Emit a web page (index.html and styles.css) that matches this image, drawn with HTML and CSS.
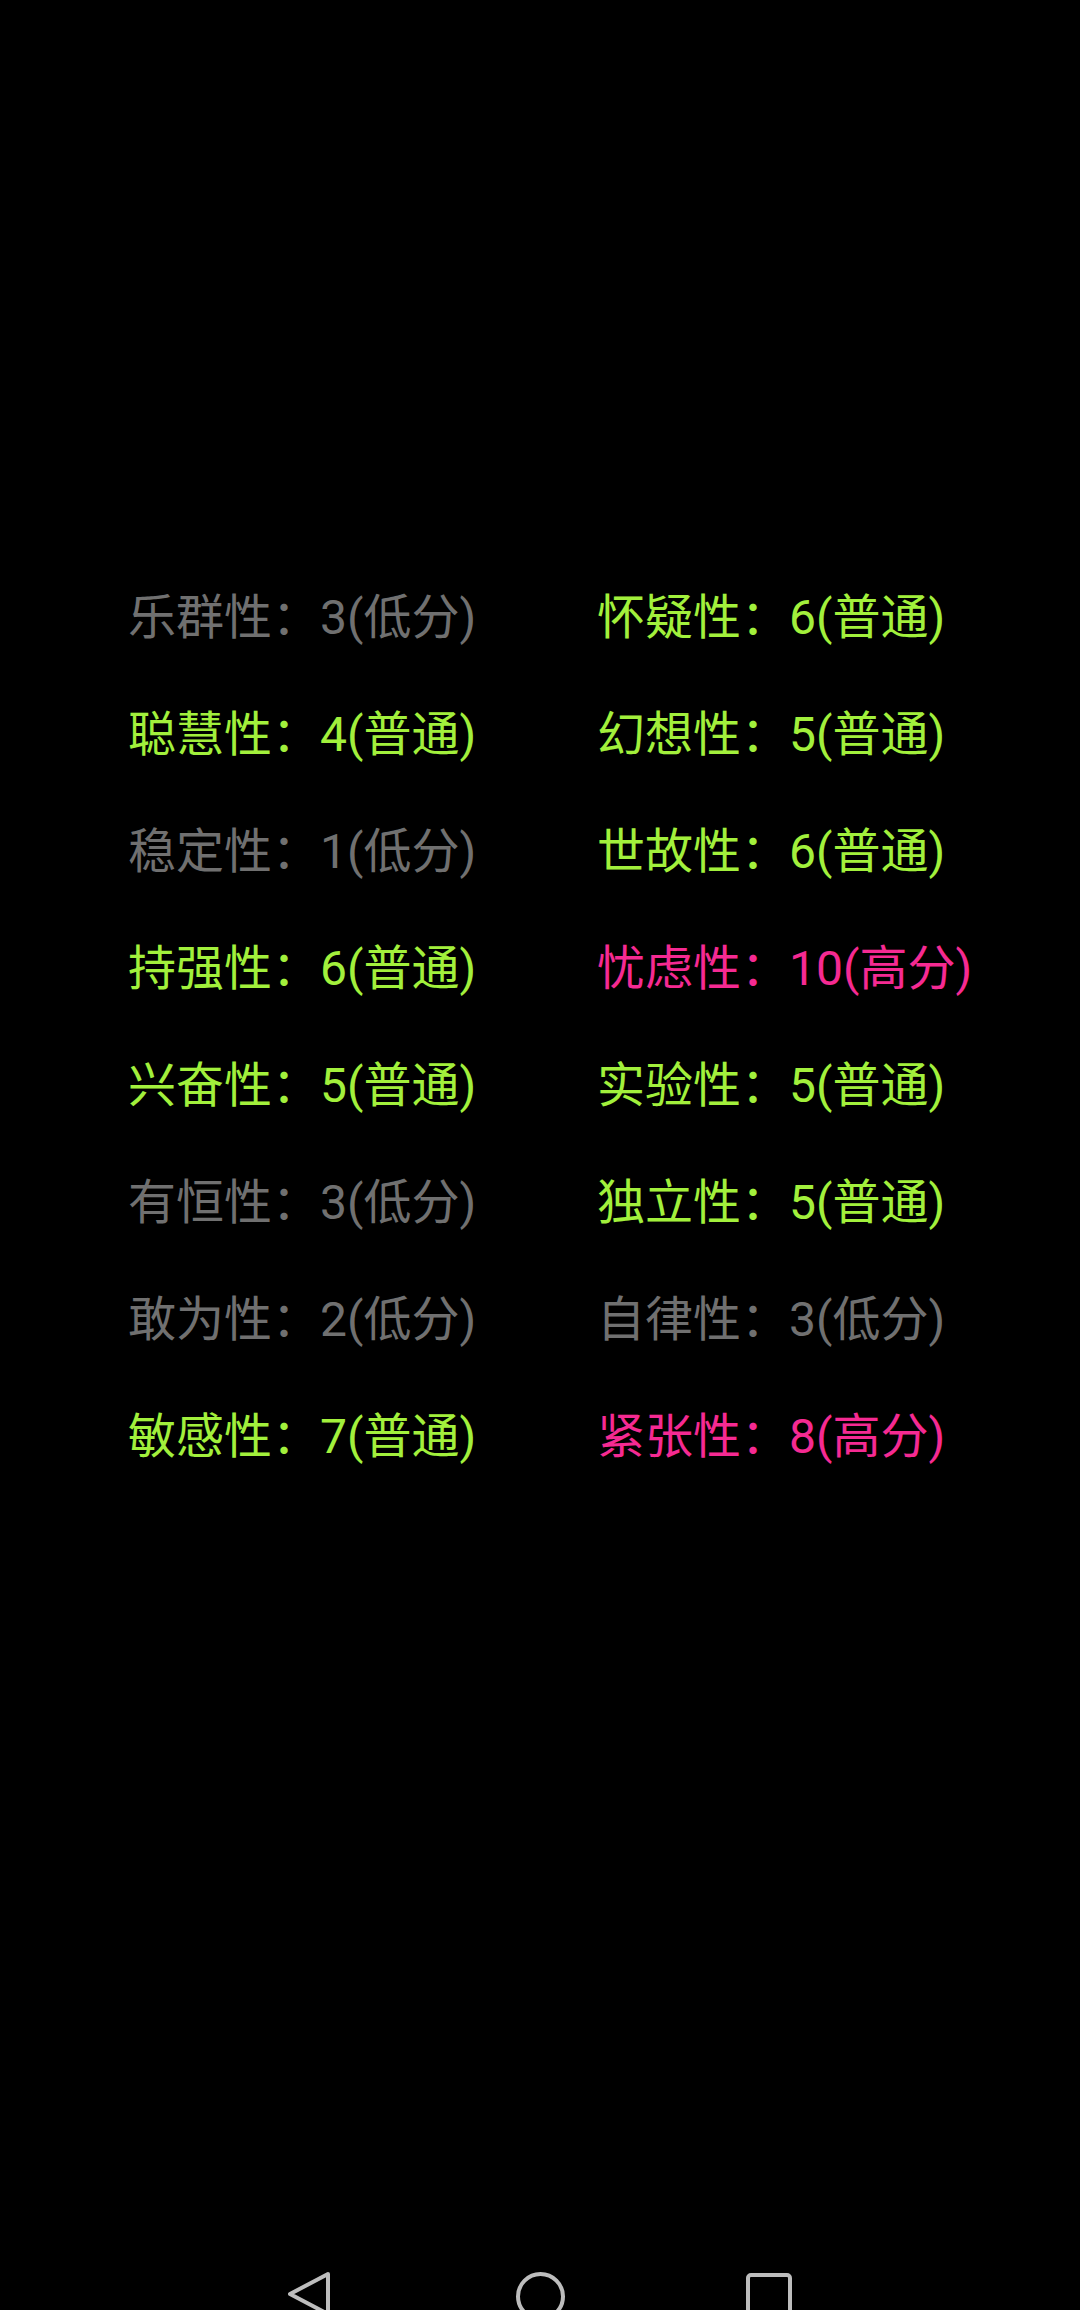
FILE: index.html
```html
<!DOCTYPE html>
<html lang="zh">
<head>
<meta charset="utf-8">
<link rel="stylesheet" href="styles.css">
</head>
<body>
<div class="page">
  <div class="grid">
    <div class="item low">乐群性：3(低分)</div>
    <div class="item mid">怀疑性：6(普通)</div>
    <div class="item mid">聪慧性：4(普通)</div>
    <div class="item mid">幻想性：5(普通)</div>
    <div class="item low">稳定性：1(低分)</div>
    <div class="item mid">世故性：6(普通)</div>
    <div class="item mid">持强性：6(普通)</div>
    <div class="item high">忧虑性：10(高分)</div>
    <div class="item mid">兴奋性：5(普通)</div>
    <div class="item mid">实验性：5(普通)</div>
    <div class="item low">有恒性：3(低分)</div>
    <div class="item mid">独立性：5(普通)</div>
    <div class="item low">敢为性：2(低分)</div>
    <div class="item low">自律性：3(低分)</div>
    <div class="item mid">敏感性：7(普通)</div>
    <div class="item high">紧张性：8(高分)</div>
  </div>
  <div class="nav">
    <svg class="nav-svg" width="1080" height="39" viewBox="0 2271 1080 39">
      <path d="M328 2274 L290 2294 L328 2314 Z" fill="none" stroke="#bdbdbd" stroke-width="4" stroke-linejoin="round"/>
      <circle cx="540.5" cy="2296.5" r="22.5" fill="none" stroke="#bdbdbd" stroke-width="4"/>
      <rect x="748" y="2275" width="42" height="46" rx="3" fill="none" stroke="#bdbdbd" stroke-width="4"/>
    </svg>
  </div>
</div>
</body>
</html>
```
FILE: styles.css
```css
html, body {
  margin: 0;
  padding: 0;
  background: #000;
}
.page {
  width: 1080px;
  height: 2310px;
  display: flex;
  flex-direction: column;
  overflow: hidden;
}
.grid {
  display: grid;
  grid-template-columns: 469px 469px;
  grid-auto-rows: 117px;
  padding-top: 559px;
  padding-left: 128px;
}
.item {
  font-family: Roboto, "Noto Sans CJK SC", sans-serif;
  font-size: 48px;
  line-height: 117px;
  white-space: nowrap;
}
.low { color: #707070; }
.mid { color: #a2f03c; }
.high { color: #f52a92; }
.nav {
  margin-top: auto;
  height: 39px;
  overflow: hidden;
}
.nav-svg {
  display: block;
}
```
